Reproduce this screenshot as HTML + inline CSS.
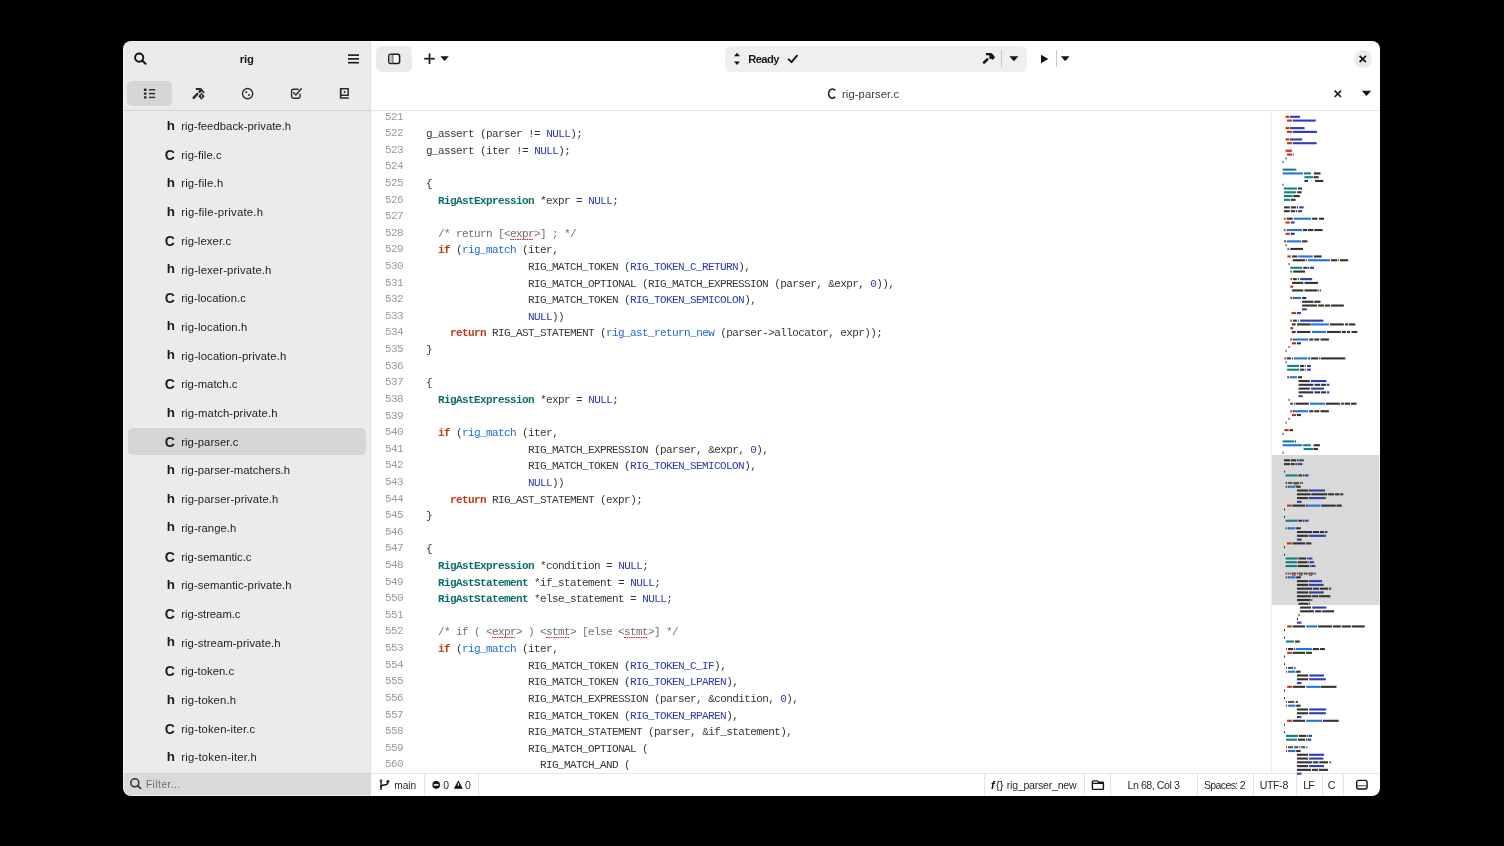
<!DOCTYPE html>
<html><head><meta charset="utf-8"><style>
html,body{margin:0;padding:0;background:#000;width:1504px;height:846px;overflow:hidden}
.t{position:absolute;white-space:pre}
.r{position:absolute}
.s{position:absolute;overflow:visible}
</style></head><body>
<div id="win" style="position:absolute;left:0;top:0;width:1504px;height:846px;clip-path:inset(41px 124px 50px 123px round 8px);background:#ffffff;will-change:transform">
<div class="r" style="left:123px;top:41px;width:248px;height:755px;background:#ebebeb;border-radius:0px;"></div>
<div class="r" style="left:370px;top:41px;width:1px;height:755px;background:#dcdcdc;border-radius:0px;"></div>
<div class="r" style="left:123px;top:110px;width:247px;height:1px;background:#d2d2d2;border-radius:0px;"></div>
<div class="r" style="left:371px;top:110px;width:1009px;height:1px;background:#e6e6e6;border-radius:0px;"></div>
<div class="r" style="left:123px;top:773px;width:247px;height:23px;background:#d9d9d9;border-radius:0px;"></div>
<div class="r" style="left:123px;top:773px;width:247px;height:1px;background:#d0d0d0;border-radius:0px;"></div>
<div class="r" style="left:371px;top:773px;width:1009px;height:1px;background:#e6e6e6;border-radius:0px;"></div>
<svg class="s" style="left:130px;top:48px;" width="20" height="20" viewBox="130 48 20 20"><circle cx="139.2" cy="57.6" r="4.1" fill="none" stroke="#111" stroke-width="1.9"/><line x1="142.3" y1="60.7" x2="145.6" y2="63.8" stroke="#111" stroke-width="2" stroke-linecap="round"/></svg>
<div class="t" style="left:239.80px;top:48.98px;font-size:11.3px;line-height:20px;color:#1a1a1a;font-weight:700;letter-spacing:-0.2px;font-family:'Liberation Sans', sans-serif;">rig</div>
<svg class="s" style="left:344px;top:50px;" width="20" height="18" viewBox="344 50 20 18"><g stroke="#151515" stroke-width="1.6"><line x1="348" y1="55.1" x2="359" y2="55.1"/><line x1="348" y1="58.9" x2="359" y2="58.9"/><line x1="348" y1="62.7" x2="359" y2="62.7"/></g></svg>
<div class="r" style="left:127px;top:81px;width:45px;height:25px;background:#d6d6d6;border-radius:5px;"></div>
<svg class="s" style="left:140px;top:84px;" width="20" height="18" viewBox="140 84 20 18"><g fill="#2b2b2b"><rect x="143.9" y="88.6" width="2.6" height="2.4" rx="0.6"/><rect x="143.9" y="92.4" width="2.6" height="2.4" rx="0.6"/><rect x="143.9" y="96.2" width="2.6" height="2.4" rx="0.6"/><rect x="148.9" y="89.1" width="6.2" height="1.4"/><rect x="148.9" y="92.9" width="6.2" height="1.4"/><rect x="148.9" y="96.7" width="6.2" height="1.4"/></g></svg>
<svg class="s" style="left:190px;top:85px;" width="18" height="18" viewBox="190 85 18 18"><line x1="193.6" y1="97.9" x2="197.4" y2="93.9" stroke="#2b2b2b" stroke-width="2.4" stroke-linecap="round"/><path d="M195.8 88.1 L200.5 88.1 Q201.9 88.5 202.7 90 L204.7 92.2 L203.5 93.4 L201.6 91.6 L199.6 93.2 L198.2 92 L199.1 90 L195.8 90 Z" fill="#2b2b2b"/><path d="M201.5 92.7 L204.6 96.2 L201.5 99.8 L198.2 96.2 Z" fill="#2b2b2b"/><path d="M201.5 94.6 L201.5 97.8" stroke="#cfcfcf" stroke-width="0.9"/></svg>
<svg class="s" style="left:240px;top:86px;" width="16" height="16" viewBox="240 86 16 16"><circle cx="247.6" cy="93.6" r="5.1" fill="none" stroke="#2b2b2b" stroke-width="1.4"/><circle cx="246.3" cy="92.3" r="1" fill="#2b2b2b"/><circle cx="249" cy="95" r="1" fill="#2b2b2b"/></svg>
<svg class="s" style="left:288px;top:85px;" width="16" height="16" viewBox="288 85 16 16"><path d="M298.2 89.2 H293.3 Q291.6 89.2 291.6 90.9 V96.5 Q291.6 98.2 293.3 98.2 H298.3 Q300 98.2 300 96.5 V94.2" fill="none" stroke="#2b2b2b" stroke-width="1.4" stroke-linecap="round"/><path d="M293.7 92.6 L295.8 95 L301.3 88.8" fill="none" stroke="#2b2b2b" stroke-width="1.4" stroke-linecap="round" stroke-linejoin="round"/></svg>
<svg class="s" style="left:336px;top:85px;" width="16" height="16" viewBox="336 85 16 16"><path fill-rule="evenodd" fill="#2b2b2b" d="M340.6 88.1 H348.9 V96.0 H341.4 V97.2 H348.9 V98.8 H340.6 Q339.8 98.8 339.8 98 V88.9 Q339.8 88.1 340.6 88.1 Z M341.6 89.4 V94.4 H347.4 V89.4 Z"/><circle cx="344.6" cy="91.9" r="1" fill="#2b2b2b"/></svg>
<div class="r" style="left:128px;top:428px;width:238px;height:27px;background:#d6d6d6;border-radius:5px;"></div>
<div class="t" style="left:-425.00px;width:600px;text-align:right;top:115.56px;font-size:13.4px;line-height:20px;color:#1a1a1a;font-weight:700;letter-spacing:0px;font-family:'Liberation Sans', sans-serif;">h</div>
<div class="t" style="left:181.20px;top:116.08px;font-size:11.3px;line-height:20px;color:#222222;font-weight:400;letter-spacing:0.033px;font-family:'Liberation Sans', sans-serif;">rig-feedback-private.h</div>
<div class="t" style="left:-425.20px;width:600px;text-align:right;top:144.75px;font-size:14px;line-height:20px;color:#1a1a1a;font-weight:700;letter-spacing:0px;font-family:'Liberation Sans', sans-serif;">C</div>
<div class="t" style="left:181.20px;top:144.78px;font-size:11.3px;line-height:20px;color:#222222;font-weight:400;letter-spacing:0.111px;font-family:'Liberation Sans', sans-serif;">rig-file.c</div>
<div class="t" style="left:-425.00px;width:600px;text-align:right;top:172.96px;font-size:13.4px;line-height:20px;color:#1a1a1a;font-weight:700;letter-spacing:0px;font-family:'Liberation Sans', sans-serif;">h</div>
<div class="t" style="left:181.20px;top:173.48px;font-size:11.3px;line-height:20px;color:#222222;font-weight:400;letter-spacing:0.2px;font-family:'Liberation Sans', sans-serif;">rig-file.h</div>
<div class="t" style="left:-425.00px;width:600px;text-align:right;top:201.66px;font-size:13.4px;line-height:20px;color:#1a1a1a;font-weight:700;letter-spacing:0px;font-family:'Liberation Sans', sans-serif;">h</div>
<div class="t" style="left:181.20px;top:202.18px;font-size:11.3px;line-height:20px;color:#222222;font-weight:400;letter-spacing:0.229px;font-family:'Liberation Sans', sans-serif;">rig-file-private.h</div>
<div class="t" style="left:-425.20px;width:600px;text-align:right;top:230.85px;font-size:14px;line-height:20px;color:#1a1a1a;font-weight:700;letter-spacing:0px;font-family:'Liberation Sans', sans-serif;">C</div>
<div class="t" style="left:181.20px;top:230.88px;font-size:11.3px;line-height:20px;color:#222222;font-weight:400;letter-spacing:0.09px;font-family:'Liberation Sans', sans-serif;">rig-lexer.c</div>
<div class="t" style="left:-425.00px;width:600px;text-align:right;top:259.06px;font-size:13.4px;line-height:20px;color:#1a1a1a;font-weight:700;letter-spacing:0px;font-family:'Liberation Sans', sans-serif;">h</div>
<div class="t" style="left:181.20px;top:259.58px;font-size:11.3px;line-height:20px;color:#222222;font-weight:400;letter-spacing:0.128px;font-family:'Liberation Sans', sans-serif;">rig-lexer-private.h</div>
<div class="t" style="left:-425.20px;width:600px;text-align:right;top:288.25px;font-size:14px;line-height:20px;color:#1a1a1a;font-weight:700;letter-spacing:0px;font-family:'Liberation Sans', sans-serif;">C</div>
<div class="t" style="left:181.20px;top:288.28px;font-size:11.3px;line-height:20px;color:#222222;font-weight:400;letter-spacing:0.046px;font-family:'Liberation Sans', sans-serif;">rig-location.c</div>
<div class="t" style="left:-425.00px;width:600px;text-align:right;top:316.46px;font-size:13.4px;line-height:20px;color:#1a1a1a;font-weight:700;letter-spacing:0px;font-family:'Liberation Sans', sans-serif;">h</div>
<div class="t" style="left:181.20px;top:316.98px;font-size:11.3px;line-height:20px;color:#222222;font-weight:400;letter-spacing:0.108px;font-family:'Liberation Sans', sans-serif;">rig-location.h</div>
<div class="t" style="left:-425.00px;width:600px;text-align:right;top:345.16px;font-size:13.4px;line-height:20px;color:#1a1a1a;font-weight:700;letter-spacing:0px;font-family:'Liberation Sans', sans-serif;">h</div>
<div class="t" style="left:181.20px;top:345.68px;font-size:11.3px;line-height:20px;color:#222222;font-weight:400;letter-spacing:0.133px;font-family:'Liberation Sans', sans-serif;">rig-location-private.h</div>
<div class="t" style="left:-425.20px;width:600px;text-align:right;top:374.35px;font-size:14px;line-height:20px;color:#1a1a1a;font-weight:700;letter-spacing:0px;font-family:'Liberation Sans', sans-serif;">C</div>
<div class="t" style="left:181.20px;top:374.38px;font-size:11.3px;line-height:20px;color:#222222;font-weight:400;letter-spacing:0.04px;font-family:'Liberation Sans', sans-serif;">rig-match.c</div>
<div class="t" style="left:-425.00px;width:600px;text-align:right;top:402.56px;font-size:13.4px;line-height:20px;color:#1a1a1a;font-weight:700;letter-spacing:0px;font-family:'Liberation Sans', sans-serif;">h</div>
<div class="t" style="left:181.20px;top:403.08px;font-size:11.3px;line-height:20px;color:#222222;font-weight:400;letter-spacing:0.117px;font-family:'Liberation Sans', sans-serif;">rig-match-private.h</div>
<div class="t" style="left:-425.20px;width:600px;text-align:right;top:431.75px;font-size:14px;line-height:20px;color:#1a1a1a;font-weight:700;letter-spacing:0px;font-family:'Liberation Sans', sans-serif;">C</div>
<div class="t" style="left:181.20px;top:431.78px;font-size:11.3px;line-height:20px;color:#222222;font-weight:400;letter-spacing:0.064px;font-family:'Liberation Sans', sans-serif;">rig-parser.c</div>
<div class="t" style="left:-425.00px;width:600px;text-align:right;top:459.96px;font-size:13.4px;line-height:20px;color:#1a1a1a;font-weight:700;letter-spacing:0px;font-family:'Liberation Sans', sans-serif;">h</div>
<div class="t" style="left:181.20px;top:460.48px;font-size:11.3px;line-height:20px;color:#222222;font-weight:400;letter-spacing:0.045px;font-family:'Liberation Sans', sans-serif;">rig-parser-matchers.h</div>
<div class="t" style="left:-425.00px;width:600px;text-align:right;top:488.66px;font-size:13.4px;line-height:20px;color:#1a1a1a;font-weight:700;letter-spacing:0px;font-family:'Liberation Sans', sans-serif;">h</div>
<div class="t" style="left:181.20px;top:489.18px;font-size:11.3px;line-height:20px;color:#222222;font-weight:400;letter-spacing:0.089px;font-family:'Liberation Sans', sans-serif;">rig-parser-private.h</div>
<div class="t" style="left:-425.00px;width:600px;text-align:right;top:517.36px;font-size:13.4px;line-height:20px;color:#1a1a1a;font-weight:700;letter-spacing:0px;font-family:'Liberation Sans', sans-serif;">h</div>
<div class="t" style="left:181.20px;top:517.88px;font-size:11.3px;line-height:20px;color:#222222;font-weight:400;letter-spacing:0.05px;font-family:'Liberation Sans', sans-serif;">rig-range.h</div>
<div class="t" style="left:-425.20px;width:600px;text-align:right;top:546.55px;font-size:14px;line-height:20px;color:#1a1a1a;font-weight:700;letter-spacing:0px;font-family:'Liberation Sans', sans-serif;">C</div>
<div class="t" style="left:181.20px;top:546.58px;font-size:11.3px;line-height:20px;color:#222222;font-weight:400;letter-spacing:0.0px;font-family:'Liberation Sans', sans-serif;">rig-semantic.c</div>
<div class="t" style="left:-425.00px;width:600px;text-align:right;top:574.76px;font-size:13.4px;line-height:20px;color:#1a1a1a;font-weight:700;letter-spacing:0px;font-family:'Liberation Sans', sans-serif;">h</div>
<div class="t" style="left:181.20px;top:575.28px;font-size:11.3px;line-height:20px;color:#222222;font-weight:400;letter-spacing:0.081px;font-family:'Liberation Sans', sans-serif;">rig-semantic-private.h</div>
<div class="t" style="left:-425.20px;width:600px;text-align:right;top:603.95px;font-size:14px;line-height:20px;color:#1a1a1a;font-weight:700;letter-spacing:0px;font-family:'Liberation Sans', sans-serif;">C</div>
<div class="t" style="left:181.20px;top:603.98px;font-size:11.3px;line-height:20px;color:#222222;font-weight:400;letter-spacing:-0.027px;font-family:'Liberation Sans', sans-serif;">rig-stream.c</div>
<div class="t" style="left:-425.00px;width:600px;text-align:right;top:632.16px;font-size:13.4px;line-height:20px;color:#1a1a1a;font-weight:700;letter-spacing:0px;font-family:'Liberation Sans', sans-serif;">h</div>
<div class="t" style="left:181.20px;top:632.68px;font-size:11.3px;line-height:20px;color:#222222;font-weight:400;letter-spacing:0.074px;font-family:'Liberation Sans', sans-serif;">rig-stream-private.h</div>
<div class="t" style="left:-425.20px;width:600px;text-align:right;top:661.35px;font-size:14px;line-height:20px;color:#1a1a1a;font-weight:700;letter-spacing:0px;font-family:'Liberation Sans', sans-serif;">C</div>
<div class="t" style="left:181.20px;top:661.38px;font-size:11.3px;line-height:20px;color:#222222;font-weight:400;letter-spacing:0.02px;font-family:'Liberation Sans', sans-serif;">rig-token.c</div>
<div class="t" style="left:-425.00px;width:600px;text-align:right;top:689.56px;font-size:13.4px;line-height:20px;color:#1a1a1a;font-weight:700;letter-spacing:0px;font-family:'Liberation Sans', sans-serif;">h</div>
<div class="t" style="left:181.20px;top:690.08px;font-size:11.3px;line-height:20px;color:#222222;font-weight:400;letter-spacing:0.15px;font-family:'Liberation Sans', sans-serif;">rig-token.h</div>
<div class="t" style="left:-425.20px;width:600px;text-align:right;top:718.75px;font-size:14px;line-height:20px;color:#1a1a1a;font-weight:700;letter-spacing:0px;font-family:'Liberation Sans', sans-serif;">C</div>
<div class="t" style="left:181.20px;top:718.78px;font-size:11.3px;line-height:20px;color:#222222;font-weight:400;letter-spacing:0.16px;font-family:'Liberation Sans', sans-serif;">rig-token-iter.c</div>
<div class="t" style="left:-425.00px;width:600px;text-align:right;top:746.96px;font-size:13.4px;line-height:20px;color:#1a1a1a;font-weight:700;letter-spacing:0px;font-family:'Liberation Sans', sans-serif;">h</div>
<div class="t" style="left:181.20px;top:747.48px;font-size:11.3px;line-height:20px;color:#222222;font-weight:400;letter-spacing:0.233px;font-family:'Liberation Sans', sans-serif;">rig-token-iter.h</div>
<svg class="s" style="left:128px;top:776px;" width="16" height="16" viewBox="128 776 16 16"><circle cx="134.8" cy="782.8" r="4.0" fill="none" stroke="#333" stroke-width="1.6"/><line x1="137.8" y1="785.8" x2="140.6" y2="788.4" stroke="#333" stroke-width="1.8" stroke-linecap="round"/></svg>
<div class="t" style="left:145.90px;top:775.33px;font-size:10px;line-height:20px;color:#6a6a6a;font-weight:400;letter-spacing:0.54px;font-family:'Liberation Sans', sans-serif;">Filter...</div>
<div class="r" style="left:376px;top:46px;width:36px;height:26px;background:#ebebeb;border-radius:6px;"></div>
<svg class="s" style="left:384px;top:50px;" width="20" height="18" viewBox="384 50 20 18"><rect x="388.8" y="54.2" width="10.8" height="9.3" rx="2" fill="#ffffff" stroke="#151515" stroke-width="1.5"/><rect x="389.4" y="54.8" width="3.2" height="8" fill="#bdbdbd"/><line x1="392.9" y1="54.2" x2="392.9" y2="63.4" stroke="#555" stroke-width="1"/></svg>
<svg class="s" style="left:420px;top:50px;" width="34" height="18" viewBox="420 50 34 18"><g stroke="#151515" stroke-width="1.7"><line x1="424.2" y1="58.7" x2="434.8" y2="58.7"/><line x1="429.5" y1="53.4" x2="429.5" y2="64"/></g><path d="M440.4 56.3 H448.8 L444.6 61.1 Z" fill="#151515"/></svg>
<div class="r" style="left:725px;top:46px;width:302px;height:26px;background:#efefef;border-radius:6px;"></div>
<svg class="s" style="left:730px;top:50px;" width="14" height="18" viewBox="730 50 14 18"><path d="M734 56.3 L737 52.8 L740 56.3 Z M734 61.4 L737 64.9 L740 61.4 Z" fill="#151515"/></svg>
<div class="t" style="left:748.20px;top:49.12px;font-size:11.2px;line-height:20px;color:#1a1a1a;font-weight:700;letter-spacing:-0.6px;font-family:'Liberation Sans', sans-serif;">Ready</div>
<svg class="s" style="left:785px;top:50px;" width="16" height="16" viewBox="785 50 16 16"><path d="M788.7 59.3 L791.5 62.1 L797 55.7" fill="none" stroke="#151515" stroke-width="1.9" stroke-linecap="round" stroke-linejoin="round"/></svg>
<svg class="s" style="left:980px;top:50px;" width="18" height="18" viewBox="980 50 18 18"><line x1="984.1" y1="62.5" x2="987.3" y2="59.3" stroke="#151515" stroke-width="2.5" stroke-linecap="round"/><path d="M986 52.9 L991 52.9 Q992.5 53.4 993.3 55.1 L995.1 57.2 L992.5 59.9 L991.1 58.5 L990.3 59.2 L988.8 57.7 L989.6 56.8 Q989.4 55.4 988.4 55.2 L986 55.2 Z" fill="#151515"/></svg>
<div class="r" style="left:1001px;top:50px;width:1px;height:17px;background:#c8c8c8;border-radius:0px;"></div>
<svg class="s" style="left:1007px;top:52px;" width="14" height="12" viewBox="1007 52 14 12"><path d="M1009.4 56.2 H1018.4 L1013.9 61.2 Z" fill="#151515"/></svg>
<svg class="s" style="left:1038px;top:50px;" width="14" height="18" viewBox="1038 50 14 18"><path d="M1041 54.8 L1048.4 59 L1041 63.2 Z" fill="#151515"/></svg>
<div class="r" style="left:1056px;top:50px;width:1px;height:17px;background:#c8c8c8;border-radius:0px;"></div>
<svg class="s" style="left:1059px;top:52px;" width="14" height="12" viewBox="1059 52 14 12"><path d="M1060.9 56.2 H1069.5 L1065.2 61.2 Z" fill="#151515"/></svg>
<div class="r" style="left:1353.9px;top:50px;width:17.8px;height:17.8px;border-radius:50%;background:#ebebeb"></div>
<svg class="s" style="left:1355px;top:51px;" width="16" height="16" viewBox="1355 51 16 16"><g stroke="#151515" stroke-width="1.7" stroke-linecap="butt"><line x1="1359.6" y1="55.8" x2="1365.9" y2="62.1"/><line x1="1365.9" y1="55.8" x2="1359.6" y2="62.1"/></g></svg>
<svg class="s" style="left:824px;top:85px;" width="16" height="18" viewBox="824 85 16 18"><path d="M835.2 90.5 A3.75 4.65 0 1 0 835.2 96.8" fill="none" stroke="#1a1a1a" stroke-width="1.6"/></svg>
<div class="t" style="left:842.00px;top:83.92px;font-size:11.2px;line-height:20px;color:#3a3a3a;font-weight:400;letter-spacing:0.1px;font-family:'Liberation Sans', sans-serif;">rig-parser.c</div>
<svg class="s" style="left:1330px;top:87px;" width="16" height="16" viewBox="1330 87 16 16"><g stroke="#151515" stroke-width="1.5"><line x1="1334.6" y1="90.6" x2="1341" y2="97"/><line x1="1341" y1="90.6" x2="1334.6" y2="97"/></g></svg>
<svg class="s" style="left:1358px;top:86px;" width="16" height="14" viewBox="1358 86 16 14"><path d="M1361.8 90.8 H1371.2 L1366.5 95.9 Z" fill="#151515"/></svg>
<svg class="s" style="left:376px;top:776px;" width="16" height="16" viewBox="376 776 16 16"><g fill="none" stroke="#151515" stroke-width="1.4" stroke-linecap="round"><path d="M381 781 V789.6"/><path d="M381 787.2 Q381 785 384 785 Q388 785 388 781.8"/></g><circle cx="381" cy="780.6" r="1" fill="none" stroke="#151515" stroke-width="0.8"/><path d="M385.8 782.2 L388 779.6 L390 782.2 Z" fill="#151515"/></svg>
<div class="t" style="left:394.20px;top:776.07px;font-size:10.2px;line-height:20px;color:#2a2a2a;font-weight:400;letter-spacing:0px;font-family:'Liberation Sans', sans-serif;">main</div>
<div class="r" style="left:424px;top:774px;width:1px;height:22px;background:#e4e4e4;border-radius:0px;"></div>
<svg class="s" style="left:430px;top:778px;" width="14" height="14" viewBox="430 778 14 14"><circle cx="436.2" cy="784.9" r="3.8" fill="#151515"/><rect x="433.8" y="784.1" width="4.8" height="1.6" fill="#fff"/></svg>
<div class="t" style="left:443.20px;top:775.90px;font-size:10.4px;line-height:20px;color:#2a2a2a;font-weight:400;letter-spacing:0px;font-family:'Liberation Sans', sans-serif;">0</div>
<svg class="s" style="left:452px;top:778px;" width="14" height="14" viewBox="452 778 14 14"><path d="M458.3 780.3 L462.8 788.7 H453.8 Z" fill="#151515"/><rect x="457.8" y="783" width="1" height="3" fill="#fff"/></svg>
<div class="t" style="left:465.00px;top:775.90px;font-size:10.4px;line-height:20px;color:#2a2a2a;font-weight:400;letter-spacing:0px;font-family:'Liberation Sans', sans-serif;">0</div>
<div class="r" style="left:478px;top:774px;width:1px;height:22px;background:#e4e4e4;border-radius:0px;"></div>
<div class="r" style="left:984px;top:774px;width:1px;height:22px;background:#e4e4e4;border-radius:0px;"></div>
<div class="r" style="left:1084px;top:774px;width:1px;height:22px;background:#e4e4e4;border-radius:0px;"></div>
<div class="r" style="left:1110px;top:774px;width:1px;height:22px;background:#e4e4e4;border-radius:0px;"></div>
<div class="r" style="left:1197px;top:774px;width:1px;height:22px;background:#e4e4e4;border-radius:0px;"></div>
<div class="r" style="left:1253px;top:774px;width:1px;height:22px;background:#e4e4e4;border-radius:0px;"></div>
<div class="r" style="left:1296px;top:774px;width:1px;height:22px;background:#e4e4e4;border-radius:0px;"></div>
<div class="r" style="left:1322px;top:774px;width:1px;height:22px;background:#e4e4e4;border-radius:0px;"></div>
<div class="r" style="left:1343px;top:774px;width:1px;height:22px;background:#e4e4e4;border-radius:0px;"></div>
<svg class="s" style="left:989px;top:777px;" width="16" height="16" viewBox="989 777 16 16"><text x="991" y="789" font-family="Liberation Sans" font-size="11" font-style="italic" font-weight="700" fill="#151515">f</text><text x="996" y="789" font-family="Liberation Sans" font-size="11" fill="#151515">{}</text></svg>
<div class="t" style="left:1006.80px;top:775.33px;font-size:10.6px;line-height:20px;color:#2a2a2a;font-weight:400;letter-spacing:-0.25px;font-family:'Liberation Sans', sans-serif;">rig_parser_new</div>
<svg class="s" style="left:1090px;top:778px;" width="16" height="14" viewBox="1090 778 16 14"><path d="M1093.2 780.9 H1097.4 L1098.6 782.2 H1102.6 Q1103.4 782.2 1103.4 783 V788.6 Q1103.4 789.4 1102.6 789.4 H1093.2 Q1092.4 789.4 1092.4 788.6 V781.7 Q1092.4 780.9 1093.2 780.9 Z M1092.4 783.4 H1103.4" fill="none" stroke="#151515" stroke-width="1.4"/></svg>
<div class="t" style="left:1127.50px;top:775.13px;font-size:10.6px;line-height:20px;color:#2a2a2a;font-weight:400;letter-spacing:-0.44px;font-family:'Liberation Sans', sans-serif;">Ln 68, Col 3</div>
<div class="t" style="left:1203.90px;top:775.13px;font-size:10.6px;line-height:20px;color:#2a2a2a;font-weight:400;letter-spacing:-0.66px;font-family:'Liberation Sans', sans-serif;">Spaces: 2</div>
<div class="t" style="left:1259.70px;top:775.13px;font-size:10.6px;line-height:20px;color:#2a2a2a;font-weight:400;letter-spacing:-0.35px;font-family:'Liberation Sans', sans-serif;">UTF-8</div>
<div class="t" style="left:1303.30px;top:775.13px;font-size:10.6px;line-height:20px;color:#2a2a2a;font-weight:400;letter-spacing:-0.9px;font-family:'Liberation Sans', sans-serif;">LF</div>
<div class="t" style="left:1327.70px;top:775.13px;font-size:10.6px;line-height:20px;color:#2a2a2a;font-weight:400;letter-spacing:0px;font-family:'Liberation Sans', sans-serif;">C</div>
<svg class="s" style="left:1352px;top:776px;" width="20" height="16" viewBox="1352 776 20 16"><rect x="1356.7" y="780.4" width="10.4" height="8.6" rx="2" fill="none" stroke="#151515" stroke-width="1.4"/><rect x="1357.2" y="785.2" width="9.4" height="1.2" fill="#151515" opacity="0.7"/></svg>
<div style="position:absolute;left:371px;top:111px;width:901px;height:662px;overflow:hidden">
<div class="t" style="left:-28.00px;width:60px;text-align:right;top:-2.44px;font-size:11px;line-height:16.61px;letter-spacing:-0.6px;font-family:'Liberation Mono', monospace;color:#9a9a9a">521</div>
<div class="t" style="left:43.00px;top:-1.44px;font-size:11px;line-height:16.61px;letter-spacing:-0.6px;font-family:'Liberation Mono', monospace;color:#363636"></div>
<div class="t" style="left:-28.00px;width:60px;text-align:right;top:14.17px;font-size:11px;line-height:16.61px;letter-spacing:-0.6px;font-family:'Liberation Mono', monospace;color:#9a9a9a">522</div>
<div class="t" style="left:43.00px;top:15.17px;font-size:11px;line-height:16.61px;letter-spacing:-0.6px;font-family:'Liberation Mono', monospace;color:#363636">  <span style="color:#363636">g_assert</span> <span style="color:#363636">(</span><span style="color:#363636">parser</span> <span style="color:#363636">!</span><span style="color:#363636">=</span> <span style="color:#2b39b0">NULL</span><span style="color:#363636">)</span><span style="color:#363636">;</span></div>
<div class="t" style="left:-28.00px;width:60px;text-align:right;top:30.78px;font-size:11px;line-height:16.61px;letter-spacing:-0.6px;font-family:'Liberation Mono', monospace;color:#9a9a9a">523</div>
<div class="t" style="left:43.00px;top:31.78px;font-size:11px;line-height:16.61px;letter-spacing:-0.6px;font-family:'Liberation Mono', monospace;color:#363636">  <span style="color:#363636">g_assert</span> <span style="color:#363636">(</span><span style="color:#363636">iter</span> <span style="color:#363636">!</span><span style="color:#363636">=</span> <span style="color:#2b39b0">NULL</span><span style="color:#363636">)</span><span style="color:#363636">;</span></div>
<div class="t" style="left:-28.00px;width:60px;text-align:right;top:47.39px;font-size:11px;line-height:16.61px;letter-spacing:-0.6px;font-family:'Liberation Mono', monospace;color:#9a9a9a">524</div>
<div class="t" style="left:43.00px;top:48.39px;font-size:11px;line-height:16.61px;letter-spacing:-0.6px;font-family:'Liberation Mono', monospace;color:#363636"></div>
<div class="t" style="left:-28.00px;width:60px;text-align:right;top:64.00px;font-size:11px;line-height:16.61px;letter-spacing:-0.6px;font-family:'Liberation Mono', monospace;color:#9a9a9a">525</div>
<div class="t" style="left:43.00px;top:65.00px;font-size:11px;line-height:16.61px;letter-spacing:-0.6px;font-family:'Liberation Mono', monospace;color:#363636">  <span style="color:#363636">{</span></div>
<div class="t" style="left:-28.00px;width:60px;text-align:right;top:80.61px;font-size:11px;line-height:16.61px;letter-spacing:-0.6px;font-family:'Liberation Mono', monospace;color:#9a9a9a">526</div>
<div class="t" style="left:43.00px;top:81.61px;font-size:11px;line-height:16.61px;letter-spacing:-0.6px;font-family:'Liberation Mono', monospace;color:#363636">    <span style="color:#0e6d6d;font-weight:700">RigAstExpression</span> <span style="color:#363636">*</span><span style="color:#363636">expr</span> <span style="color:#363636">=</span> <span style="color:#2b39b0">NULL</span><span style="color:#363636">;</span></div>
<div class="t" style="left:-28.00px;width:60px;text-align:right;top:97.22px;font-size:11px;line-height:16.61px;letter-spacing:-0.6px;font-family:'Liberation Mono', monospace;color:#9a9a9a">527</div>
<div class="t" style="left:43.00px;top:98.22px;font-size:11px;line-height:16.61px;letter-spacing:-0.6px;font-family:'Liberation Mono', monospace;color:#363636"></div>
<div class="t" style="left:-28.00px;width:60px;text-align:right;top:113.83px;font-size:11px;line-height:16.61px;letter-spacing:-0.6px;font-family:'Liberation Mono', monospace;color:#9a9a9a">528</div>
<div class="t" style="left:43.00px;top:114.83px;font-size:11px;line-height:16.61px;letter-spacing:-0.6px;font-family:'Liberation Mono', monospace;color:#363636">    <span style="color:#707070">/* return [&lt;expr&gt;] ; */</span></div>
<div class="t" style="left:-28.00px;width:60px;text-align:right;top:130.44px;font-size:11px;line-height:16.61px;letter-spacing:-0.6px;font-family:'Liberation Mono', monospace;color:#9a9a9a">529</div>
<div class="t" style="left:43.00px;top:131.44px;font-size:11px;line-height:16.61px;letter-spacing:-0.6px;font-family:'Liberation Mono', monospace;color:#363636">    <span style="color:#c23a0b;font-weight:700">if</span> <span style="color:#363636">(</span><span style="color:#1c6bd6">rig_match</span> <span style="color:#363636">(</span><span style="color:#363636">iter</span><span style="color:#363636">,</span></div>
<div class="t" style="left:-28.00px;width:60px;text-align:right;top:147.05px;font-size:11px;line-height:16.61px;letter-spacing:-0.6px;font-family:'Liberation Mono', monospace;color:#9a9a9a">530</div>
<div class="t" style="left:43.00px;top:148.05px;font-size:11px;line-height:16.61px;letter-spacing:-0.6px;font-family:'Liberation Mono', monospace;color:#363636">                   <span style="color:#363636">RIG_MATCH_TOKEN</span> <span style="color:#363636">(</span><span style="color:#2b39b0">RIG_TOKEN_C_RETURN</span><span style="color:#363636">)</span><span style="color:#363636">,</span></div>
<div class="t" style="left:-28.00px;width:60px;text-align:right;top:163.66px;font-size:11px;line-height:16.61px;letter-spacing:-0.6px;font-family:'Liberation Mono', monospace;color:#9a9a9a">531</div>
<div class="t" style="left:43.00px;top:164.66px;font-size:11px;line-height:16.61px;letter-spacing:-0.6px;font-family:'Liberation Mono', monospace;color:#363636">                   <span style="color:#363636">RIG_MATCH_OPTIONAL</span> <span style="color:#363636">(</span><span style="color:#363636">RIG_MATCH_EXPRESSION</span> <span style="color:#363636">(</span><span style="color:#363636">parser</span><span style="color:#363636">,</span> <span style="color:#363636">&amp;</span><span style="color:#363636">expr</span><span style="color:#363636">,</span> <span style="color:#2b39b0">0</span><span style="color:#363636">)</span><span style="color:#363636">)</span><span style="color:#363636">,</span></div>
<div class="t" style="left:-28.00px;width:60px;text-align:right;top:180.27px;font-size:11px;line-height:16.61px;letter-spacing:-0.6px;font-family:'Liberation Mono', monospace;color:#9a9a9a">532</div>
<div class="t" style="left:43.00px;top:181.27px;font-size:11px;line-height:16.61px;letter-spacing:-0.6px;font-family:'Liberation Mono', monospace;color:#363636">                   <span style="color:#363636">RIG_MATCH_TOKEN</span> <span style="color:#363636">(</span><span style="color:#2b39b0">RIG_TOKEN_SEMICOLON</span><span style="color:#363636">)</span><span style="color:#363636">,</span></div>
<div class="t" style="left:-28.00px;width:60px;text-align:right;top:196.88px;font-size:11px;line-height:16.61px;letter-spacing:-0.6px;font-family:'Liberation Mono', monospace;color:#9a9a9a">533</div>
<div class="t" style="left:43.00px;top:197.88px;font-size:11px;line-height:16.61px;letter-spacing:-0.6px;font-family:'Liberation Mono', monospace;color:#363636">                   <span style="color:#2b39b0">NULL</span><span style="color:#363636">)</span><span style="color:#363636">)</span></div>
<div class="t" style="left:-28.00px;width:60px;text-align:right;top:213.49px;font-size:11px;line-height:16.61px;letter-spacing:-0.6px;font-family:'Liberation Mono', monospace;color:#9a9a9a">534</div>
<div class="t" style="left:43.00px;top:214.49px;font-size:11px;line-height:16.61px;letter-spacing:-0.6px;font-family:'Liberation Mono', monospace;color:#363636">      <span style="color:#c23a0b;font-weight:700">return</span> <span style="color:#363636">RIG_AST_STATEMENT</span> <span style="color:#363636">(</span><span style="color:#1c6bd6">rig_ast_return_new</span> <span style="color:#363636">(</span><span style="color:#363636">parser</span><span style="color:#363636">-</span><span style="color:#363636">&gt;</span><span style="color:#363636">allocator</span><span style="color:#363636">,</span> <span style="color:#363636">expr</span><span style="color:#363636">)</span><span style="color:#363636">)</span><span style="color:#363636">;</span></div>
<div class="t" style="left:-28.00px;width:60px;text-align:right;top:230.10px;font-size:11px;line-height:16.61px;letter-spacing:-0.6px;font-family:'Liberation Mono', monospace;color:#9a9a9a">535</div>
<div class="t" style="left:43.00px;top:231.10px;font-size:11px;line-height:16.61px;letter-spacing:-0.6px;font-family:'Liberation Mono', monospace;color:#363636">  <span style="color:#363636">}</span></div>
<div class="t" style="left:-28.00px;width:60px;text-align:right;top:246.71px;font-size:11px;line-height:16.61px;letter-spacing:-0.6px;font-family:'Liberation Mono', monospace;color:#9a9a9a">536</div>
<div class="t" style="left:43.00px;top:247.71px;font-size:11px;line-height:16.61px;letter-spacing:-0.6px;font-family:'Liberation Mono', monospace;color:#363636"></div>
<div class="t" style="left:-28.00px;width:60px;text-align:right;top:263.32px;font-size:11px;line-height:16.61px;letter-spacing:-0.6px;font-family:'Liberation Mono', monospace;color:#9a9a9a">537</div>
<div class="t" style="left:43.00px;top:264.32px;font-size:11px;line-height:16.61px;letter-spacing:-0.6px;font-family:'Liberation Mono', monospace;color:#363636">  <span style="color:#363636">{</span></div>
<div class="t" style="left:-28.00px;width:60px;text-align:right;top:279.93px;font-size:11px;line-height:16.61px;letter-spacing:-0.6px;font-family:'Liberation Mono', monospace;color:#9a9a9a">538</div>
<div class="t" style="left:43.00px;top:280.93px;font-size:11px;line-height:16.61px;letter-spacing:-0.6px;font-family:'Liberation Mono', monospace;color:#363636">    <span style="color:#0e6d6d;font-weight:700">RigAstExpression</span> <span style="color:#363636">*</span><span style="color:#363636">expr</span> <span style="color:#363636">=</span> <span style="color:#2b39b0">NULL</span><span style="color:#363636">;</span></div>
<div class="t" style="left:-28.00px;width:60px;text-align:right;top:296.54px;font-size:11px;line-height:16.61px;letter-spacing:-0.6px;font-family:'Liberation Mono', monospace;color:#9a9a9a">539</div>
<div class="t" style="left:43.00px;top:297.54px;font-size:11px;line-height:16.61px;letter-spacing:-0.6px;font-family:'Liberation Mono', monospace;color:#363636"></div>
<div class="t" style="left:-28.00px;width:60px;text-align:right;top:313.15px;font-size:11px;line-height:16.61px;letter-spacing:-0.6px;font-family:'Liberation Mono', monospace;color:#9a9a9a">540</div>
<div class="t" style="left:43.00px;top:314.15px;font-size:11px;line-height:16.61px;letter-spacing:-0.6px;font-family:'Liberation Mono', monospace;color:#363636">    <span style="color:#c23a0b;font-weight:700">if</span> <span style="color:#363636">(</span><span style="color:#1c6bd6">rig_match</span> <span style="color:#363636">(</span><span style="color:#363636">iter</span><span style="color:#363636">,</span></div>
<div class="t" style="left:-28.00px;width:60px;text-align:right;top:329.76px;font-size:11px;line-height:16.61px;letter-spacing:-0.6px;font-family:'Liberation Mono', monospace;color:#9a9a9a">541</div>
<div class="t" style="left:43.00px;top:330.76px;font-size:11px;line-height:16.61px;letter-spacing:-0.6px;font-family:'Liberation Mono', monospace;color:#363636">                   <span style="color:#363636">RIG_MATCH_EXPRESSION</span> <span style="color:#363636">(</span><span style="color:#363636">parser</span><span style="color:#363636">,</span> <span style="color:#363636">&amp;</span><span style="color:#363636">expr</span><span style="color:#363636">,</span> <span style="color:#2b39b0">0</span><span style="color:#363636">)</span><span style="color:#363636">,</span></div>
<div class="t" style="left:-28.00px;width:60px;text-align:right;top:346.37px;font-size:11px;line-height:16.61px;letter-spacing:-0.6px;font-family:'Liberation Mono', monospace;color:#9a9a9a">542</div>
<div class="t" style="left:43.00px;top:347.37px;font-size:11px;line-height:16.61px;letter-spacing:-0.6px;font-family:'Liberation Mono', monospace;color:#363636">                   <span style="color:#363636">RIG_MATCH_TOKEN</span> <span style="color:#363636">(</span><span style="color:#2b39b0">RIG_TOKEN_SEMICOLON</span><span style="color:#363636">)</span><span style="color:#363636">,</span></div>
<div class="t" style="left:-28.00px;width:60px;text-align:right;top:362.98px;font-size:11px;line-height:16.61px;letter-spacing:-0.6px;font-family:'Liberation Mono', monospace;color:#9a9a9a">543</div>
<div class="t" style="left:43.00px;top:363.98px;font-size:11px;line-height:16.61px;letter-spacing:-0.6px;font-family:'Liberation Mono', monospace;color:#363636">                   <span style="color:#2b39b0">NULL</span><span style="color:#363636">)</span><span style="color:#363636">)</span></div>
<div class="t" style="left:-28.00px;width:60px;text-align:right;top:379.59px;font-size:11px;line-height:16.61px;letter-spacing:-0.6px;font-family:'Liberation Mono', monospace;color:#9a9a9a">544</div>
<div class="t" style="left:43.00px;top:380.59px;font-size:11px;line-height:16.61px;letter-spacing:-0.6px;font-family:'Liberation Mono', monospace;color:#363636">      <span style="color:#c23a0b;font-weight:700">return</span> <span style="color:#363636">RIG_AST_STATEMENT</span> <span style="color:#363636">(</span><span style="color:#363636">expr</span><span style="color:#363636">)</span><span style="color:#363636">;</span></div>
<div class="t" style="left:-28.00px;width:60px;text-align:right;top:396.20px;font-size:11px;line-height:16.61px;letter-spacing:-0.6px;font-family:'Liberation Mono', monospace;color:#9a9a9a">545</div>
<div class="t" style="left:43.00px;top:397.20px;font-size:11px;line-height:16.61px;letter-spacing:-0.6px;font-family:'Liberation Mono', monospace;color:#363636">  <span style="color:#363636">}</span></div>
<div class="t" style="left:-28.00px;width:60px;text-align:right;top:412.81px;font-size:11px;line-height:16.61px;letter-spacing:-0.6px;font-family:'Liberation Mono', monospace;color:#9a9a9a">546</div>
<div class="t" style="left:43.00px;top:413.81px;font-size:11px;line-height:16.61px;letter-spacing:-0.6px;font-family:'Liberation Mono', monospace;color:#363636"></div>
<div class="t" style="left:-28.00px;width:60px;text-align:right;top:429.42px;font-size:11px;line-height:16.61px;letter-spacing:-0.6px;font-family:'Liberation Mono', monospace;color:#9a9a9a">547</div>
<div class="t" style="left:43.00px;top:430.42px;font-size:11px;line-height:16.61px;letter-spacing:-0.6px;font-family:'Liberation Mono', monospace;color:#363636">  <span style="color:#363636">{</span></div>
<div class="t" style="left:-28.00px;width:60px;text-align:right;top:446.03px;font-size:11px;line-height:16.61px;letter-spacing:-0.6px;font-family:'Liberation Mono', monospace;color:#9a9a9a">548</div>
<div class="t" style="left:43.00px;top:447.03px;font-size:11px;line-height:16.61px;letter-spacing:-0.6px;font-family:'Liberation Mono', monospace;color:#363636">    <span style="color:#0e6d6d;font-weight:700">RigAstExpression</span> <span style="color:#363636">*</span><span style="color:#363636">condition</span> <span style="color:#363636">=</span> <span style="color:#2b39b0">NULL</span><span style="color:#363636">;</span></div>
<div class="t" style="left:-28.00px;width:60px;text-align:right;top:462.64px;font-size:11px;line-height:16.61px;letter-spacing:-0.6px;font-family:'Liberation Mono', monospace;color:#9a9a9a">549</div>
<div class="t" style="left:43.00px;top:463.64px;font-size:11px;line-height:16.61px;letter-spacing:-0.6px;font-family:'Liberation Mono', monospace;color:#363636">    <span style="color:#0e6d6d;font-weight:700">RigAstStatement</span> <span style="color:#363636">*</span><span style="color:#363636">if_statement</span> <span style="color:#363636">=</span> <span style="color:#2b39b0">NULL</span><span style="color:#363636">;</span></div>
<div class="t" style="left:-28.00px;width:60px;text-align:right;top:479.25px;font-size:11px;line-height:16.61px;letter-spacing:-0.6px;font-family:'Liberation Mono', monospace;color:#9a9a9a">550</div>
<div class="t" style="left:43.00px;top:480.25px;font-size:11px;line-height:16.61px;letter-spacing:-0.6px;font-family:'Liberation Mono', monospace;color:#363636">    <span style="color:#0e6d6d;font-weight:700">RigAstStatement</span> <span style="color:#363636">*</span><span style="color:#363636">else_statement</span> <span style="color:#363636">=</span> <span style="color:#2b39b0">NULL</span><span style="color:#363636">;</span></div>
<div class="t" style="left:-28.00px;width:60px;text-align:right;top:495.86px;font-size:11px;line-height:16.61px;letter-spacing:-0.6px;font-family:'Liberation Mono', monospace;color:#9a9a9a">551</div>
<div class="t" style="left:43.00px;top:496.86px;font-size:11px;line-height:16.61px;letter-spacing:-0.6px;font-family:'Liberation Mono', monospace;color:#363636"></div>
<div class="t" style="left:-28.00px;width:60px;text-align:right;top:512.47px;font-size:11px;line-height:16.61px;letter-spacing:-0.6px;font-family:'Liberation Mono', monospace;color:#9a9a9a">552</div>
<div class="t" style="left:43.00px;top:513.47px;font-size:11px;line-height:16.61px;letter-spacing:-0.6px;font-family:'Liberation Mono', monospace;color:#363636">    <span style="color:#707070">/* if ( &lt;expr&gt; ) &lt;stmt&gt; [else &lt;stmt&gt;] */</span></div>
<div class="t" style="left:-28.00px;width:60px;text-align:right;top:529.08px;font-size:11px;line-height:16.61px;letter-spacing:-0.6px;font-family:'Liberation Mono', monospace;color:#9a9a9a">553</div>
<div class="t" style="left:43.00px;top:530.08px;font-size:11px;line-height:16.61px;letter-spacing:-0.6px;font-family:'Liberation Mono', monospace;color:#363636">    <span style="color:#c23a0b;font-weight:700">if</span> <span style="color:#363636">(</span><span style="color:#1c6bd6">rig_match</span> <span style="color:#363636">(</span><span style="color:#363636">iter</span><span style="color:#363636">,</span></div>
<div class="t" style="left:-28.00px;width:60px;text-align:right;top:545.69px;font-size:11px;line-height:16.61px;letter-spacing:-0.6px;font-family:'Liberation Mono', monospace;color:#9a9a9a">554</div>
<div class="t" style="left:43.00px;top:546.69px;font-size:11px;line-height:16.61px;letter-spacing:-0.6px;font-family:'Liberation Mono', monospace;color:#363636">                   <span style="color:#363636">RIG_MATCH_TOKEN</span> <span style="color:#363636">(</span><span style="color:#2b39b0">RIG_TOKEN_C_IF</span><span style="color:#363636">)</span><span style="color:#363636">,</span></div>
<div class="t" style="left:-28.00px;width:60px;text-align:right;top:562.30px;font-size:11px;line-height:16.61px;letter-spacing:-0.6px;font-family:'Liberation Mono', monospace;color:#9a9a9a">555</div>
<div class="t" style="left:43.00px;top:563.30px;font-size:11px;line-height:16.61px;letter-spacing:-0.6px;font-family:'Liberation Mono', monospace;color:#363636">                   <span style="color:#363636">RIG_MATCH_TOKEN</span> <span style="color:#363636">(</span><span style="color:#2b39b0">RIG_TOKEN_LPAREN</span><span style="color:#363636">)</span><span style="color:#363636">,</span></div>
<div class="t" style="left:-28.00px;width:60px;text-align:right;top:578.91px;font-size:11px;line-height:16.61px;letter-spacing:-0.6px;font-family:'Liberation Mono', monospace;color:#9a9a9a">556</div>
<div class="t" style="left:43.00px;top:579.91px;font-size:11px;line-height:16.61px;letter-spacing:-0.6px;font-family:'Liberation Mono', monospace;color:#363636">                   <span style="color:#363636">RIG_MATCH_EXPRESSION</span> <span style="color:#363636">(</span><span style="color:#363636">parser</span><span style="color:#363636">,</span> <span style="color:#363636">&amp;</span><span style="color:#363636">condition</span><span style="color:#363636">,</span> <span style="color:#2b39b0">0</span><span style="color:#363636">)</span><span style="color:#363636">,</span></div>
<div class="t" style="left:-28.00px;width:60px;text-align:right;top:595.52px;font-size:11px;line-height:16.61px;letter-spacing:-0.6px;font-family:'Liberation Mono', monospace;color:#9a9a9a">557</div>
<div class="t" style="left:43.00px;top:596.52px;font-size:11px;line-height:16.61px;letter-spacing:-0.6px;font-family:'Liberation Mono', monospace;color:#363636">                   <span style="color:#363636">RIG_MATCH_TOKEN</span> <span style="color:#363636">(</span><span style="color:#2b39b0">RIG_TOKEN_RPAREN</span><span style="color:#363636">)</span><span style="color:#363636">,</span></div>
<div class="t" style="left:-28.00px;width:60px;text-align:right;top:612.13px;font-size:11px;line-height:16.61px;letter-spacing:-0.6px;font-family:'Liberation Mono', monospace;color:#9a9a9a">558</div>
<div class="t" style="left:43.00px;top:613.13px;font-size:11px;line-height:16.61px;letter-spacing:-0.6px;font-family:'Liberation Mono', monospace;color:#363636">                   <span style="color:#363636">RIG_MATCH_STATEMENT</span> <span style="color:#363636">(</span><span style="color:#363636">parser</span><span style="color:#363636">,</span> <span style="color:#363636">&amp;</span><span style="color:#363636">if_statement</span><span style="color:#363636">)</span><span style="color:#363636">,</span></div>
<div class="t" style="left:-28.00px;width:60px;text-align:right;top:628.74px;font-size:11px;line-height:16.61px;letter-spacing:-0.6px;font-family:'Liberation Mono', monospace;color:#9a9a9a">559</div>
<div class="t" style="left:43.00px;top:629.74px;font-size:11px;line-height:16.61px;letter-spacing:-0.6px;font-family:'Liberation Mono', monospace;color:#363636">                   <span style="color:#363636">RIG_MATCH_OPTIONAL</span> <span style="color:#363636">(</span></div>
<div class="t" style="left:-28.00px;width:60px;text-align:right;top:645.35px;font-size:11px;line-height:16.61px;letter-spacing:-0.6px;font-family:'Liberation Mono', monospace;color:#9a9a9a">560</div>
<div class="t" style="left:43.00px;top:646.35px;font-size:11px;line-height:16.61px;letter-spacing:-0.6px;font-family:'Liberation Mono', monospace;color:#363636">                     <span style="color:#363636">RIG_MATCH_AND</span> <span style="color:#363636">(</span></div>
<div class="r" style="left:139.00px;top:127.67px;width:24.00px;height:1.2px;background-image:linear-gradient(90deg,#e01b24 0 1.2px,transparent 1.2px 2.4px);background-size:2.4px 1.2px"></div>
<div class="r" style="left:121.00px;top:526.31px;width:24.00px;height:1.2px;background-image:linear-gradient(90deg,#e01b24 0 1.2px,transparent 1.2px 2.4px);background-size:2.4px 1.2px"></div>
<div class="r" style="left:175.00px;top:526.31px;width:24.00px;height:1.2px;background-image:linear-gradient(90deg,#e01b24 0 1.2px,transparent 1.2px 2.4px);background-size:2.4px 1.2px"></div>
<div class="r" style="left:253.00px;top:526.31px;width:24.00px;height:1.2px;background-image:linear-gradient(90deg,#e01b24 0 1.2px,transparent 1.2px 2.4px);background-size:2.4px 1.2px"></div>
</div>
<div class="r" style="left:1271px;top:111px;width:1px;height:662px;background:#ececec;border-radius:0px;"></div>
<div class="r" style="left:1272px;top:454.7px;width:108px;height:150.1px;background:#d9d9d9;border-radius:0px;"></div>
<svg class="s" style="left:1272px;top:111px" width="108" height="662" viewBox="1272 111 108 662"><rect x="1285.54" y="115.75" width="3.57" height="2.1" fill="#c3300f"/><rect x="1289.72" y="115.75" width="10.26" height="2.1" fill="#2c3cb4"/><rect x="1287.06" y="119.53" width="4.79" height="2.1" fill="#c3300f"/><rect x="1292.68" y="119.53" width="23.03" height="2.1" fill="#2c3cb4"/><rect x="1285.54" y="127.08" width="3.57" height="2.1" fill="#c3300f"/><rect x="1289.72" y="127.08" width="14.82" height="2.1" fill="#2c3cb4"/><rect x="1287.06" y="130.85" width="4.79" height="2.1" fill="#c3300f"/><rect x="1292.68" y="130.85" width="24.24" height="2.1" fill="#2c3cb4"/><rect x="1285.54" y="138.40" width="3.57" height="2.1" fill="#c3300f"/><rect x="1289.72" y="138.40" width="12.39" height="2.1" fill="#2c3cb4"/><rect x="1287.06" y="142.17" width="4.79" height="2.1" fill="#c3300f"/><rect x="1292.68" y="142.17" width="24.02" height="2.1" fill="#2c3cb4"/><rect x="1285.54" y="149.72" width="6.31" height="2.1" fill="#c3300f"/><rect x="1287.06" y="153.50" width="4.79" height="2.1" fill="#c3300f"/><rect x="1292.68" y="153.50" width="1.06" height="2.1" fill="#2c3cb4"/><rect x="1285.54" y="157.27" width="1.00" height="2.1" fill="#333333"/><rect x="1282.50" y="161.05" width="1.00" height="2.1" fill="#333333"/><rect x="1282.65" y="168.60" width="12.24" height="2.1" fill="#138080"/><rect x="1295.27" y="168.60" width="1.00" height="2.1" fill="#333333"/><rect x="1282.65" y="172.38" width="20.29" height="2.1" fill="#1f74e0"/><rect x="1303.93" y="172.38" width="7.07" height="2.1" fill="#138080"/><rect x="1313.96" y="172.38" width="6.54" height="2.1" fill="#333333"/><rect x="1304.39" y="176.15" width="8.97" height="2.1" fill="#138080"/><rect x="1313.96" y="176.15" width="4.71" height="2.1" fill="#333333"/><rect x="1304.46" y="179.92" width="3.57" height="2.1" fill="#333333"/><rect x="1315.10" y="179.92" width="8.28" height="2.1" fill="#333333"/><rect x="1282.50" y="183.70" width="1.00" height="2.1" fill="#333333"/><rect x="1283.79" y="187.47" width="13.22" height="2.1" fill="#138080"/><rect x="1298.00" y="187.47" width="4.10" height="2.1" fill="#333333"/><rect x="1284.02" y="191.25" width="12.16" height="2.1" fill="#138080"/><rect x="1297.17" y="191.25" width="4.41" height="2.1" fill="#333333"/><rect x="1284.02" y="195.02" width="8.66" height="2.1" fill="#138080"/><rect x="1293.29" y="195.02" width="6.46" height="2.1" fill="#333333"/><rect x="1284.02" y="198.80" width="5.93" height="2.1" fill="#138080"/><rect x="1290.86" y="198.80" width="4.79" height="2.1" fill="#333333"/><rect x="1284.02" y="206.35" width="5.70" height="2.1" fill="#333333"/><rect x="1290.86" y="206.35" width="5.32" height="2.1" fill="#333333"/><rect x="1296.94" y="206.35" width="1.14" height="2.1" fill="#333333"/><rect x="1299.22" y="206.35" width="4.41" height="2.1" fill="#2c3cb4"/><rect x="1284.02" y="210.12" width="5.70" height="2.1" fill="#333333"/><rect x="1290.86" y="210.12" width="4.18" height="2.1" fill="#333333"/><rect x="1295.80" y="210.12" width="1.14" height="2.1" fill="#333333"/><rect x="1298.00" y="210.12" width="4.10" height="2.1" fill="#2c3cb4"/><rect x="1284.02" y="217.67" width="1.60" height="2.1" fill="#c3300f"/><rect x="1286.76" y="217.67" width="5.93" height="2.1" fill="#333333"/><rect x="1293.90" y="217.67" width="17.10" height="2.1" fill="#1f74e0"/><rect x="1312.14" y="217.67" width="5.32" height="2.1" fill="#333333"/><rect x="1318.98" y="217.67" width="5.02" height="2.1" fill="#333333"/><rect x="1285.54" y="221.45" width="4.18" height="2.1" fill="#c3300f"/><rect x="1290.86" y="221.45" width="3.80" height="2.1" fill="#2c3cb4"/><rect x="1284.02" y="229.00" width="1.52" height="2.1" fill="#c3300f"/><rect x="1286.76" y="229.00" width="1.00" height="2.1" fill="#333333"/><rect x="1287.36" y="229.00" width="14.74" height="2.1" fill="#1f74e0"/><rect x="1303.02" y="229.00" width="4.18" height="2.1" fill="#333333"/><rect x="1308.04" y="229.00" width="5.32" height="2.1" fill="#333333"/><rect x="1314.27" y="229.00" width="8.28" height="2.1" fill="#333333"/><rect x="1285.54" y="232.77" width="4.18" height="2.1" fill="#c3300f"/><rect x="1290.86" y="232.77" width="3.80" height="2.1" fill="#333333"/><rect x="1284.02" y="240.32" width="1.90" height="2.1" fill="#c3300f"/><rect x="1286.76" y="240.32" width="14.21" height="2.1" fill="#1f74e0"/><rect x="1301.88" y="240.32" width="5.55" height="2.1" fill="#333333"/><rect x="1285.54" y="244.10" width="1.00" height="2.1" fill="#333333"/><rect x="1287.36" y="247.88" width="1.75" height="2.1" fill="#138080"/><rect x="1290.33" y="247.88" width="12.62" height="2.1" fill="#333333"/><rect x="1287.36" y="255.42" width="3.50" height="2.1" fill="#c3300f"/><rect x="1292.08" y="255.42" width="4.94" height="2.1" fill="#333333"/><rect x="1297.70" y="255.42" width="1.00" height="2.1" fill="#333333"/><rect x="1299.22" y="255.42" width="13.53" height="2.1" fill="#1f74e0"/><rect x="1313.96" y="255.42" width="7.68" height="2.1" fill="#333333"/><rect x="1292.68" y="259.20" width="12.39" height="2.1" fill="#333333"/><rect x="1305.91" y="259.20" width="1.00" height="2.1" fill="#333333"/><rect x="1308.04" y="259.20" width="21.89" height="2.1" fill="#1f74e0"/><rect x="1331.06" y="259.20" width="5.93" height="2.1" fill="#333333"/><rect x="1337.75" y="259.20" width="1.00" height="2.1" fill="#333333"/><rect x="1339.96" y="259.20" width="8.28" height="2.1" fill="#333333"/><rect x="1288.58" y="262.97" width="1.00" height="2.1" fill="#333333"/><rect x="1290.33" y="266.75" width="11.78" height="2.1" fill="#138080"/><rect x="1303.32" y="266.75" width="4.10" height="2.1" fill="#333333"/><rect x="1307.96" y="266.75" width="1.00" height="2.1" fill="#333333"/><rect x="1309.86" y="266.75" width="4.10" height="2.1" fill="#2c3cb4"/><rect x="1290.33" y="270.52" width="1.75" height="2.1" fill="#138080"/><rect x="1293.29" y="270.52" width="11.78" height="2.1" fill="#333333"/><rect x="1290.33" y="278.07" width="1.75" height="2.1" fill="#c3300f"/><rect x="1293.06" y="278.07" width="3.72" height="2.1" fill="#333333"/><rect x="1297.85" y="278.07" width="1.00" height="2.1" fill="#333333"/><rect x="1300.13" y="278.07" width="12.01" height="2.1" fill="#2c3cb4"/><rect x="1292.08" y="281.85" width="11.25" height="2.1" fill="#333333"/><rect x="1304.54" y="281.85" width="13.53" height="2.1" fill="#333333"/><rect x="1290.33" y="285.62" width="2.96" height="2.1" fill="#c3300f"/><rect x="1292.08" y="289.40" width="11.25" height="2.1" fill="#333333"/><rect x="1304.54" y="289.40" width="12.92" height="2.1" fill="#333333"/><rect x="1318.22" y="289.40" width="1.00" height="2.1" fill="#333333"/><rect x="1320.12" y="289.40" width="1.00" height="2.1" fill="#2c3cb4"/><rect x="1290.33" y="296.95" width="1.75" height="2.1" fill="#c3300f"/><rect x="1292.91" y="296.95" width="1.00" height="2.1" fill="#333333"/><rect x="1293.90" y="296.95" width="7.07" height="2.1" fill="#1f74e0"/><rect x="1302.11" y="296.95" width="4.18" height="2.1" fill="#333333"/><rect x="1302.11" y="300.72" width="11.25" height="2.1" fill="#333333"/><rect x="1314.27" y="300.72" width="6.23" height="2.1" fill="#333333"/><rect x="1302.11" y="304.50" width="14.82" height="2.1" fill="#333333"/><rect x="1318.07" y="304.50" width="5.93" height="2.1" fill="#333333"/><rect x="1324.91" y="304.50" width="5.24" height="2.1" fill="#333333"/><rect x="1331.06" y="304.50" width="12.77" height="2.1" fill="#333333"/><rect x="1302.11" y="308.27" width="3.19" height="2.1" fill="#2c3cb4"/><rect x="1305.30" y="308.27" width="1.52" height="2.1" fill="#333333"/><rect x="1291.47" y="312.05" width="4.71" height="2.1" fill="#c3300f"/><rect x="1297.02" y="312.05" width="3.95" height="2.1" fill="#2c3cb4"/><rect x="1290.33" y="319.60" width="1.75" height="2.1" fill="#c3300f"/><rect x="1293.06" y="319.60" width="3.72" height="2.1" fill="#333333"/><rect x="1297.85" y="319.60" width="1.00" height="2.1" fill="#333333"/><rect x="1300.13" y="319.60" width="23.26" height="2.1" fill="#2c3cb4"/><rect x="1291.85" y="323.38" width="3.80" height="2.1" fill="#333333"/><rect x="1297.02" y="323.38" width="13.38" height="2.1" fill="#333333"/><rect x="1310.62" y="323.38" width="1.00" height="2.1" fill="#333333"/><rect x="1311.91" y="323.38" width="17.02" height="2.1" fill="#1f74e0"/><rect x="1329.92" y="323.38" width="13.91" height="2.1" fill="#333333"/><rect x="1345.05" y="323.38" width="3.19" height="2.1" fill="#333333"/><rect x="1349.00" y="323.38" width="6.31" height="2.1" fill="#333333"/><rect x="1290.33" y="327.15" width="2.96" height="2.1" fill="#c3300f"/><rect x="1291.85" y="330.92" width="3.80" height="2.1" fill="#333333"/><rect x="1297.02" y="330.92" width="13.38" height="2.1" fill="#333333"/><rect x="1311.91" y="330.92" width="14.21" height="2.1" fill="#1f74e0"/><rect x="1326.96" y="330.92" width="13.83" height="2.1" fill="#333333"/><rect x="1341.93" y="330.92" width="3.95" height="2.1" fill="#333333"/><rect x="1347.02" y="330.92" width="2.96" height="2.1" fill="#333333"/><rect x="1351.43" y="330.92" width="5.85" height="2.1" fill="#333333"/><rect x="1290.33" y="338.47" width="1.75" height="2.1" fill="#c3300f"/><rect x="1292.91" y="338.47" width="1.00" height="2.1" fill="#333333"/><rect x="1293.90" y="338.47" width="14.14" height="2.1" fill="#1f74e0"/><rect x="1309.25" y="338.47" width="4.10" height="2.1" fill="#333333"/><rect x="1314.27" y="338.47" width="5.02" height="2.1" fill="#333333"/><rect x="1320.50" y="338.47" width="8.44" height="2.1" fill="#333333"/><rect x="1291.85" y="342.25" width="4.33" height="2.1" fill="#c3300f"/><rect x="1297.02" y="342.25" width="3.95" height="2.1" fill="#333333"/><rect x="1288.58" y="346.02" width="1.00" height="2.1" fill="#333333"/><rect x="1285.54" y="349.80" width="1.00" height="2.1" fill="#333333"/><rect x="1284.40" y="357.35" width="1.52" height="2.1" fill="#c3300f"/><rect x="1286.76" y="357.35" width="4.10" height="2.1" fill="#333333"/><rect x="1291.92" y="357.35" width="1.00" height="2.1" fill="#333333"/><rect x="1293.90" y="357.35" width="13.30" height="2.1" fill="#1f74e0"/><rect x="1308.34" y="357.35" width="1.67" height="2.1" fill="#333333"/><rect x="1311.00" y="357.35" width="7.07" height="2.1" fill="#333333"/><rect x="1318.90" y="357.35" width="1.00" height="2.1" fill="#333333"/><rect x="1320.65" y="357.35" width="24.62" height="2.1" fill="#333333"/><rect x="1285.54" y="361.12" width="1.00" height="2.1" fill="#333333"/><rect x="1287.14" y="364.90" width="12.01" height="2.1" fill="#138080"/><rect x="1300.13" y="364.90" width="3.80" height="2.1" fill="#333333"/><rect x="1304.69" y="364.90" width="1.00" height="2.1" fill="#333333"/><rect x="1307.12" y="364.90" width="3.65" height="2.1" fill="#2c3cb4"/><rect x="1287.14" y="368.67" width="12.01" height="2.1" fill="#138080"/><rect x="1300.13" y="368.67" width="3.80" height="2.1" fill="#333333"/><rect x="1304.69" y="368.67" width="1.00" height="2.1" fill="#333333"/><rect x="1307.12" y="368.67" width="3.65" height="2.1" fill="#2c3cb4"/><rect x="1287.14" y="376.22" width="1.98" height="2.1" fill="#c3300f"/><rect x="1289.72" y="376.22" width="7.30" height="2.1" fill="#1f74e0"/><rect x="1298.00" y="376.22" width="4.10" height="2.1" fill="#333333"/><rect x="1298.61" y="380.00" width="11.17" height="2.1" fill="#333333"/><rect x="1311.00" y="380.00" width="15.35" height="2.1" fill="#2c3cb4"/><rect x="1298.61" y="383.77" width="14.74" height="2.1" fill="#333333"/><rect x="1314.57" y="383.77" width="5.62" height="2.1" fill="#333333"/><rect x="1321.03" y="383.77" width="5.09" height="2.1" fill="#333333"/><rect x="1326.96" y="383.77" width="2.36" height="2.1" fill="#2c3cb4"/><rect x="1298.61" y="387.55" width="11.17" height="2.1" fill="#333333"/><rect x="1311.00" y="387.55" width="13.00" height="2.1" fill="#2c3cb4"/><rect x="1298.61" y="391.32" width="14.74" height="2.1" fill="#333333"/><rect x="1314.57" y="391.32" width="5.62" height="2.1" fill="#333333"/><rect x="1321.03" y="391.32" width="5.09" height="2.1" fill="#333333"/><rect x="1326.96" y="391.32" width="2.36" height="2.1" fill="#2c3cb4"/><rect x="1298.61" y="395.10" width="2.89" height="2.1" fill="#2c3cb4"/><rect x="1301.50" y="395.10" width="1.22" height="2.1" fill="#333333"/><rect x="1288.58" y="398.88" width="1.00" height="2.1" fill="#333333"/><rect x="1290.33" y="402.65" width="2.36" height="2.1" fill="#333333"/><rect x="1293.90" y="402.65" width="1.00" height="2.1" fill="#333333"/><rect x="1295.65" y="402.65" width="13.22" height="2.1" fill="#333333"/><rect x="1310.01" y="402.65" width="14.90" height="2.1" fill="#1f74e0"/><rect x="1325.74" y="402.65" width="14.21" height="2.1" fill="#333333"/><rect x="1341.10" y="402.65" width="2.74" height="2.1" fill="#333333"/><rect x="1344.67" y="402.65" width="5.32" height="2.1" fill="#333333"/><rect x="1350.90" y="402.65" width="5.55" height="2.1" fill="#333333"/><rect x="1290.33" y="410.20" width="1.75" height="2.1" fill="#c3300f"/><rect x="1292.91" y="410.20" width="1.00" height="2.1" fill="#333333"/><rect x="1293.90" y="410.20" width="14.14" height="2.1" fill="#1f74e0"/><rect x="1309.25" y="410.20" width="4.10" height="2.1" fill="#333333"/><rect x="1314.27" y="410.20" width="5.02" height="2.1" fill="#333333"/><rect x="1320.50" y="410.20" width="8.36" height="2.1" fill="#333333"/><rect x="1291.85" y="413.97" width="4.33" height="2.1" fill="#c3300f"/><rect x="1297.02" y="413.97" width="3.95" height="2.1" fill="#333333"/><rect x="1288.58" y="417.75" width="1.00" height="2.1" fill="#333333"/><rect x="1285.54" y="421.52" width="1.00" height="2.1" fill="#333333"/><rect x="1284.40" y="429.07" width="4.18" height="2.1" fill="#c3300f"/><rect x="1289.49" y="429.07" width="3.57" height="2.1" fill="#333333"/><rect x="1282.50" y="432.85" width="1.00" height="2.1" fill="#333333"/><rect x="1282.65" y="440.40" width="11.55" height="2.1" fill="#138080"/><rect x="1295.04" y="440.40" width="1.00" height="2.1" fill="#333333"/><rect x="1282.65" y="444.18" width="19.46" height="2.1" fill="#1f74e0"/><rect x="1302.94" y="444.18" width="7.83" height="2.1" fill="#138080"/><rect x="1313.58" y="444.18" width="6.31" height="2.1" fill="#333333"/><rect x="1303.63" y="447.95" width="9.50" height="2.1" fill="#138080"/><rect x="1313.58" y="447.95" width="4.48" height="2.1" fill="#333333"/><rect x="1282.50" y="451.72" width="1.00" height="2.1" fill="#333333"/><rect x="1284.02" y="459.27" width="6.08" height="2.1" fill="#333333"/><rect x="1290.86" y="459.27" width="5.32" height="2.1" fill="#333333"/><rect x="1296.94" y="459.27" width="1.52" height="2.1" fill="#333333"/><rect x="1299.22" y="459.27" width="3.04" height="2.1" fill="#2c3cb4"/><rect x="1302.26" y="459.27" width="1.52" height="2.1" fill="#333333"/><rect x="1284.02" y="463.05" width="6.08" height="2.1" fill="#333333"/><rect x="1290.86" y="463.05" width="3.80" height="2.1" fill="#333333"/><rect x="1295.42" y="463.05" width="1.52" height="2.1" fill="#333333"/><rect x="1297.70" y="463.05" width="3.04" height="2.1" fill="#2c3cb4"/><rect x="1300.74" y="463.05" width="1.52" height="2.1" fill="#333333"/><rect x="1284.02" y="470.60" width="1.00" height="2.1" fill="#333333"/><rect x="1285.54" y="474.38" width="12.16" height="2.1" fill="#138080"/><rect x="1298.46" y="474.38" width="3.80" height="2.1" fill="#333333"/><rect x="1303.02" y="474.38" width="1.00" height="2.1" fill="#333333"/><rect x="1304.54" y="474.38" width="3.04" height="2.1" fill="#2c3cb4"/><rect x="1307.58" y="474.38" width="1.00" height="2.1" fill="#333333"/><rect x="1285.54" y="481.93" width="1.52" height="2.1" fill="#555555"/><rect x="1287.82" y="481.93" width="4.56" height="2.1" fill="#555555"/><rect x="1293.14" y="481.93" width="6.08" height="2.1" fill="#555555"/><rect x="1299.98" y="481.93" width="1.00" height="2.1" fill="#555555"/><rect x="1301.50" y="481.93" width="1.52" height="2.1" fill="#555555"/><rect x="1285.54" y="485.70" width="1.52" height="2.1" fill="#c3300f"/><rect x="1287.82" y="485.70" width="1.00" height="2.1" fill="#333333"/><rect x="1288.58" y="485.70" width="6.84" height="2.1" fill="#1f74e0"/><rect x="1296.18" y="485.70" width="4.56" height="2.1" fill="#333333"/><rect x="1296.94" y="489.47" width="11.40" height="2.1" fill="#333333"/><rect x="1309.10" y="489.47" width="1.00" height="2.1" fill="#333333"/><rect x="1309.86" y="489.47" width="13.68" height="2.1" fill="#2c3cb4"/><rect x="1323.54" y="489.47" width="1.52" height="2.1" fill="#333333"/><rect x="1296.94" y="493.25" width="13.68" height="2.1" fill="#333333"/><rect x="1311.38" y="493.25" width="15.96" height="2.1" fill="#333333"/><rect x="1328.10" y="493.25" width="6.08" height="2.1" fill="#333333"/><rect x="1334.94" y="493.25" width="4.56" height="2.1" fill="#333333"/><rect x="1340.26" y="493.25" width="1.00" height="2.1" fill="#2c3cb4"/><rect x="1341.02" y="493.25" width="2.28" height="2.1" fill="#333333"/><rect x="1296.94" y="497.02" width="11.40" height="2.1" fill="#333333"/><rect x="1309.10" y="497.02" width="1.00" height="2.1" fill="#333333"/><rect x="1309.86" y="497.02" width="14.44" height="2.1" fill="#2c3cb4"/><rect x="1324.30" y="497.02" width="1.52" height="2.1" fill="#333333"/><rect x="1296.94" y="500.80" width="3.04" height="2.1" fill="#2c3cb4"/><rect x="1299.98" y="500.80" width="1.52" height="2.1" fill="#333333"/><rect x="1287.06" y="504.57" width="4.56" height="2.1" fill="#c3300f"/><rect x="1292.38" y="504.57" width="12.92" height="2.1" fill="#333333"/><rect x="1306.06" y="504.57" width="1.00" height="2.1" fill="#333333"/><rect x="1306.82" y="504.57" width="13.68" height="2.1" fill="#1f74e0"/><rect x="1321.26" y="504.57" width="14.44" height="2.1" fill="#333333"/><rect x="1336.46" y="504.57" width="5.32" height="2.1" fill="#333333"/><rect x="1284.02" y="508.35" width="1.00" height="2.1" fill="#333333"/><rect x="1284.02" y="515.90" width="1.00" height="2.1" fill="#333333"/><rect x="1285.54" y="519.68" width="12.16" height="2.1" fill="#138080"/><rect x="1298.46" y="519.68" width="3.80" height="2.1" fill="#333333"/><rect x="1303.02" y="519.68" width="1.00" height="2.1" fill="#333333"/><rect x="1304.54" y="519.68" width="3.04" height="2.1" fill="#2c3cb4"/><rect x="1307.58" y="519.68" width="1.00" height="2.1" fill="#333333"/><rect x="1285.54" y="527.23" width="1.52" height="2.1" fill="#c3300f"/><rect x="1287.82" y="527.23" width="1.00" height="2.1" fill="#333333"/><rect x="1288.58" y="527.23" width="6.84" height="2.1" fill="#1f74e0"/><rect x="1296.18" y="527.23" width="4.56" height="2.1" fill="#333333"/><rect x="1296.94" y="531.00" width="15.20" height="2.1" fill="#333333"/><rect x="1312.90" y="531.00" width="6.08" height="2.1" fill="#333333"/><rect x="1319.74" y="531.00" width="4.56" height="2.1" fill="#333333"/><rect x="1325.06" y="531.00" width="1.00" height="2.1" fill="#2c3cb4"/><rect x="1325.82" y="531.00" width="1.52" height="2.1" fill="#333333"/><rect x="1296.94" y="534.77" width="11.40" height="2.1" fill="#333333"/><rect x="1309.10" y="534.77" width="1.00" height="2.1" fill="#333333"/><rect x="1309.86" y="534.77" width="14.44" height="2.1" fill="#2c3cb4"/><rect x="1324.30" y="534.77" width="1.52" height="2.1" fill="#333333"/><rect x="1296.94" y="538.55" width="3.04" height="2.1" fill="#2c3cb4"/><rect x="1299.98" y="538.55" width="1.52" height="2.1" fill="#333333"/><rect x="1287.06" y="542.33" width="4.56" height="2.1" fill="#c3300f"/><rect x="1292.38" y="542.33" width="12.92" height="2.1" fill="#333333"/><rect x="1306.06" y="542.33" width="5.32" height="2.1" fill="#333333"/><rect x="1284.02" y="546.10" width="1.00" height="2.1" fill="#333333"/><rect x="1284.02" y="553.65" width="1.00" height="2.1" fill="#333333"/><rect x="1285.54" y="557.43" width="12.16" height="2.1" fill="#138080"/><rect x="1298.46" y="557.43" width="7.60" height="2.1" fill="#333333"/><rect x="1306.82" y="557.43" width="1.00" height="2.1" fill="#333333"/><rect x="1308.34" y="557.43" width="3.04" height="2.1" fill="#2c3cb4"/><rect x="1311.38" y="557.43" width="1.00" height="2.1" fill="#333333"/><rect x="1285.54" y="561.20" width="11.40" height="2.1" fill="#138080"/><rect x="1297.70" y="561.20" width="9.88" height="2.1" fill="#333333"/><rect x="1308.34" y="561.20" width="1.00" height="2.1" fill="#333333"/><rect x="1309.86" y="561.20" width="3.04" height="2.1" fill="#2c3cb4"/><rect x="1312.90" y="561.20" width="1.00" height="2.1" fill="#333333"/><rect x="1285.54" y="564.98" width="11.40" height="2.1" fill="#138080"/><rect x="1297.70" y="564.98" width="11.40" height="2.1" fill="#333333"/><rect x="1309.86" y="564.98" width="1.00" height="2.1" fill="#333333"/><rect x="1311.38" y="564.98" width="3.04" height="2.1" fill="#2c3cb4"/><rect x="1314.42" y="564.98" width="1.00" height="2.1" fill="#333333"/><rect x="1285.54" y="572.52" width="1.52" height="2.1" fill="#555555"/><rect x="1287.82" y="572.52" width="1.52" height="2.1" fill="#555555"/><rect x="1290.10" y="572.52" width="1.00" height="2.1" fill="#555555"/><rect x="1291.62" y="572.52" width="4.56" height="2.1" fill="#555555"/><rect x="1296.94" y="572.52" width="1.00" height="2.1" fill="#555555"/><rect x="1298.46" y="572.52" width="4.56" height="2.1" fill="#555555"/><rect x="1303.78" y="572.52" width="3.80" height="2.1" fill="#555555"/><rect x="1308.34" y="572.52" width="5.32" height="2.1" fill="#555555"/><rect x="1314.42" y="572.52" width="1.52" height="2.1" fill="#555555"/><rect x="1285.54" y="576.30" width="1.52" height="2.1" fill="#c3300f"/><rect x="1287.82" y="576.30" width="1.00" height="2.1" fill="#333333"/><rect x="1288.58" y="576.30" width="6.84" height="2.1" fill="#1f74e0"/><rect x="1296.18" y="576.30" width="4.56" height="2.1" fill="#333333"/><rect x="1296.94" y="580.08" width="11.40" height="2.1" fill="#333333"/><rect x="1309.10" y="580.08" width="1.00" height="2.1" fill="#333333"/><rect x="1309.86" y="580.08" width="10.64" height="2.1" fill="#2c3cb4"/><rect x="1320.50" y="580.08" width="1.52" height="2.1" fill="#333333"/><rect x="1296.94" y="583.85" width="11.40" height="2.1" fill="#333333"/><rect x="1309.10" y="583.85" width="1.00" height="2.1" fill="#333333"/><rect x="1309.86" y="583.85" width="12.16" height="2.1" fill="#2c3cb4"/><rect x="1322.02" y="583.85" width="1.52" height="2.1" fill="#333333"/><rect x="1296.94" y="587.62" width="15.20" height="2.1" fill="#333333"/><rect x="1312.90" y="587.62" width="6.08" height="2.1" fill="#333333"/><rect x="1319.74" y="587.62" width="8.36" height="2.1" fill="#333333"/><rect x="1328.86" y="587.62" width="1.00" height="2.1" fill="#2c3cb4"/><rect x="1329.62" y="587.62" width="1.52" height="2.1" fill="#333333"/><rect x="1296.94" y="591.40" width="11.40" height="2.1" fill="#333333"/><rect x="1309.10" y="591.40" width="1.00" height="2.1" fill="#333333"/><rect x="1309.86" y="591.40" width="12.16" height="2.1" fill="#2c3cb4"/><rect x="1322.02" y="591.40" width="1.52" height="2.1" fill="#333333"/><rect x="1296.94" y="595.18" width="14.44" height="2.1" fill="#333333"/><rect x="1312.14" y="595.18" width="6.08" height="2.1" fill="#333333"/><rect x="1318.98" y="595.18" width="11.40" height="2.1" fill="#333333"/><rect x="1296.94" y="598.95" width="13.68" height="2.1" fill="#333333"/><rect x="1311.38" y="598.95" width="1.00" height="2.1" fill="#333333"/><rect x="1298.46" y="602.73" width="9.88" height="2.1" fill="#333333"/><rect x="1309.10" y="602.73" width="1.00" height="2.1" fill="#333333"/><rect x="1300.13" y="606.50" width="10.87" height="2.1" fill="#333333"/><rect x="1312.14" y="606.50" width="14.21" height="2.1" fill="#2c3cb4"/><rect x="1300.13" y="610.27" width="13.83" height="2.1" fill="#333333"/><rect x="1315.18" y="610.27" width="6.23" height="2.1" fill="#333333"/><rect x="1322.25" y="610.27" width="11.78" height="2.1" fill="#333333"/><rect x="1298.46" y="614.05" width="1.14" height="2.1" fill="#333333"/><rect x="1296.94" y="617.83" width="1.14" height="2.1" fill="#333333"/><rect x="1297.02" y="621.60" width="3.34" height="2.1" fill="#2c3cb4"/><rect x="1300.36" y="621.60" width="1.14" height="2.1" fill="#333333"/><rect x="1287.14" y="625.38" width="4.71" height="2.1" fill="#c3300f"/><rect x="1292.68" y="625.38" width="12.39" height="2.1" fill="#333333"/><rect x="1306.29" y="625.38" width="10.87" height="2.1" fill="#1f74e0"/><rect x="1318.07" y="625.38" width="13.98" height="2.1" fill="#333333"/><rect x="1332.89" y="625.38" width="7.90" height="2.1" fill="#333333"/><rect x="1341.70" y="625.38" width="9.20" height="2.1" fill="#333333"/><rect x="1351.74" y="625.38" width="13.00" height="2.1" fill="#333333"/><rect x="1284.02" y="629.15" width="1.00" height="2.1" fill="#333333"/><rect x="1284.02" y="636.70" width="1.00" height="2.1" fill="#333333"/><rect x="1285.92" y="640.48" width="7.98" height="2.1" fill="#138080"/><rect x="1295.04" y="640.48" width="4.71" height="2.1" fill="#333333"/><rect x="1285.92" y="648.02" width="1.00" height="2.1" fill="#c3300f"/><rect x="1287.97" y="648.02" width="5.09" height="2.1" fill="#333333"/><rect x="1293.82" y="648.02" width="1.00" height="2.1" fill="#333333"/><rect x="1295.65" y="648.02" width="16.26" height="2.1" fill="#1f74e0"/><rect x="1312.75" y="648.02" width="6.23" height="2.1" fill="#333333"/><rect x="1319.89" y="648.02" width="5.02" height="2.1" fill="#333333"/><rect x="1287.14" y="651.80" width="4.71" height="2.1" fill="#c3300f"/><rect x="1292.68" y="651.80" width="12.39" height="2.1" fill="#333333"/><rect x="1306.06" y="651.80" width="5.85" height="2.1" fill="#333333"/><rect x="1284.02" y="655.57" width="1.00" height="2.1" fill="#333333"/><rect x="1284.02" y="663.12" width="1.00" height="2.1" fill="#333333"/><rect x="1285.92" y="666.90" width="1.00" height="2.1" fill="#555555"/><rect x="1287.97" y="666.90" width="5.09" height="2.1" fill="#555555"/><rect x="1294.28" y="666.90" width="1.37" height="2.1" fill="#555555"/><rect x="1285.92" y="670.67" width="1.00" height="2.1" fill="#c3300f"/><rect x="1287.97" y="670.67" width="7.45" height="2.1" fill="#1f74e0"/><rect x="1296.18" y="670.67" width="4.41" height="2.1" fill="#333333"/><rect x="1296.94" y="674.45" width="11.10" height="2.1" fill="#333333"/><rect x="1309.25" y="674.45" width="14.74" height="2.1" fill="#2c3cb4"/><rect x="1296.94" y="678.23" width="11.10" height="2.1" fill="#333333"/><rect x="1309.25" y="678.23" width="16.57" height="2.1" fill="#2c3cb4"/><rect x="1296.94" y="682.00" width="3.42" height="2.1" fill="#2c3cb4"/><rect x="1300.36" y="682.00" width="1.14" height="2.1" fill="#333333"/><rect x="1287.14" y="685.77" width="4.71" height="2.1" fill="#c3300f"/><rect x="1292.68" y="685.77" width="12.39" height="2.1" fill="#333333"/><rect x="1306.29" y="685.77" width="13.60" height="2.1" fill="#1f74e0"/><rect x="1320.50" y="685.77" width="15.96" height="2.1" fill="#333333"/><rect x="1284.02" y="689.55" width="1.00" height="2.1" fill="#333333"/><rect x="1284.02" y="697.10" width="1.00" height="2.1" fill="#333333"/><rect x="1285.92" y="700.88" width="1.00" height="2.1" fill="#555555"/><rect x="1287.97" y="700.88" width="6.23" height="2.1" fill="#555555"/><rect x="1295.65" y="700.88" width="2.36" height="2.1" fill="#555555"/><rect x="1285.92" y="704.65" width="1.14" height="2.1" fill="#c3300f"/><rect x="1287.97" y="704.65" width="7.45" height="2.1" fill="#1f74e0"/><rect x="1296.18" y="704.65" width="4.41" height="2.1" fill="#333333"/><rect x="1296.94" y="708.42" width="11.10" height="2.1" fill="#333333"/><rect x="1309.10" y="708.42" width="17.02" height="2.1" fill="#2c3cb4"/><rect x="1296.94" y="712.20" width="11.10" height="2.1" fill="#333333"/><rect x="1309.10" y="712.20" width="16.72" height="2.1" fill="#2c3cb4"/><rect x="1296.94" y="715.98" width="3.42" height="2.1" fill="#2c3cb4"/><rect x="1300.36" y="715.98" width="1.14" height="2.1" fill="#333333"/><rect x="1287.06" y="719.75" width="4.79" height="2.1" fill="#c3300f"/><rect x="1292.68" y="719.75" width="12.39" height="2.1" fill="#333333"/><rect x="1306.29" y="719.75" width="15.96" height="2.1" fill="#1f74e0"/><rect x="1323.01" y="719.75" width="15.73" height="2.1" fill="#333333"/><rect x="1284.02" y="723.52" width="1.00" height="2.1" fill="#333333"/><rect x="1284.02" y="731.07" width="1.00" height="2.1" fill="#333333"/><rect x="1285.92" y="734.85" width="12.08" height="2.1" fill="#138080"/><rect x="1298.92" y="734.85" width="7.37" height="2.1" fill="#333333"/><rect x="1306.82" y="734.85" width="1.00" height="2.1" fill="#333333"/><rect x="1308.64" y="734.85" width="3.27" height="2.1" fill="#2c3cb4"/><rect x="1285.92" y="738.62" width="11.10" height="2.1" fill="#138080"/><rect x="1298.00" y="738.62" width="7.07" height="2.1" fill="#333333"/><rect x="1305.91" y="738.62" width="1.00" height="2.1" fill="#333333"/><rect x="1307.43" y="738.62" width="3.80" height="2.1" fill="#2c3cb4"/><rect x="1285.92" y="746.17" width="1.00" height="2.1" fill="#555555"/><rect x="1287.97" y="746.17" width="5.09" height="2.1" fill="#555555"/><rect x="1294.20" y="746.17" width="4.03" height="2.1" fill="#555555"/><rect x="1299.22" y="746.17" width="1.00" height="2.1" fill="#555555"/><rect x="1301.12" y="746.17" width="3.95" height="2.1" fill="#555555"/><rect x="1306.29" y="746.17" width="1.14" height="2.1" fill="#555555"/><rect x="1285.92" y="749.95" width="1.14" height="2.1" fill="#c3300f"/><rect x="1287.97" y="749.95" width="7.45" height="2.1" fill="#1f74e0"/><rect x="1296.18" y="749.95" width="4.41" height="2.1" fill="#333333"/><rect x="1296.94" y="753.73" width="11.10" height="2.1" fill="#333333"/><rect x="1309.10" y="753.73" width="14.90" height="2.1" fill="#2c3cb4"/><rect x="1296.94" y="757.50" width="11.10" height="2.1" fill="#333333"/><rect x="1309.10" y="757.50" width="14.29" height="2.1" fill="#2c3cb4"/><rect x="1296.94" y="761.27" width="14.97" height="2.1" fill="#333333"/><rect x="1312.75" y="761.27" width="5.55" height="2.1" fill="#333333"/><rect x="1319.28" y="761.27" width="8.82" height="2.1" fill="#333333"/><rect x="1329.32" y="761.27" width="1.52" height="2.1" fill="#2c3cb4"/><rect x="1296.94" y="765.05" width="11.10" height="2.1" fill="#333333"/><rect x="1309.10" y="765.05" width="14.90" height="2.1" fill="#2c3cb4"/><rect x="1296.94" y="768.82" width="14.06" height="2.1" fill="#333333"/><rect x="1311.91" y="768.82" width="6.16" height="2.1" fill="#333333"/><rect x="1318.98" y="768.82" width="9.12" height="2.1" fill="#333333"/><rect x="1296.94" y="772.60" width="3.42" height="2.1" fill="#2c3cb4"/><rect x="1300.36" y="772.60" width="1.14" height="2.1" fill="#333333"/><rect x="1294.66" y="484.28" width="1.2" height="1.2" fill="#e01b24"/><rect x="1296.50" y="484.28" width="1.2" height="1.2" fill="#e01b24"/><rect x="1292.38" y="574.88" width="1.2" height="1.2" fill="#e01b24"/><rect x="1294.22" y="574.88" width="1.2" height="1.2" fill="#e01b24"/><rect x="1299.22" y="574.88" width="1.2" height="1.2" fill="#e01b24"/><rect x="1301.06" y="574.88" width="1.2" height="1.2" fill="#e01b24"/><rect x="1309.10" y="574.88" width="1.2" height="1.2" fill="#e01b24"/><rect x="1310.94" y="574.88" width="1.2" height="1.2" fill="#e01b24"/></svg>
<div style="position:absolute;left:123px;top:41px;width:1257px;height:755px;border-radius:8px;box-shadow:inset 0 0 0 1px rgba(255,255,255,0.6)"></div>
</div>
</body></html>
